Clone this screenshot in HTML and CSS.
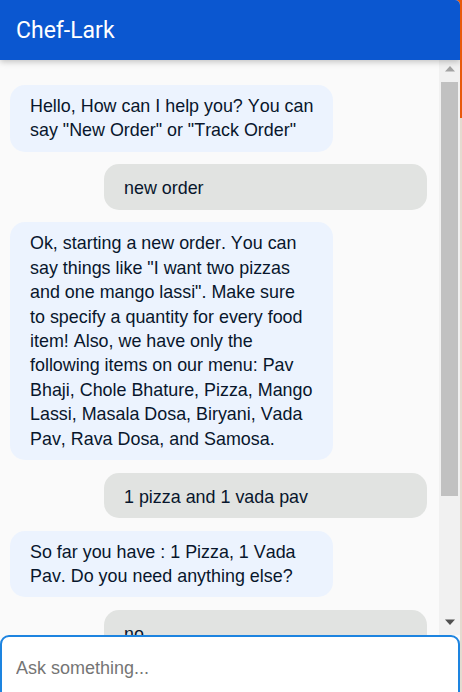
FILE: index.html
```html
<!DOCTYPE html>
<html lang="en">
<head>
<meta charset="utf-8">
<title>Chef-Lark</title>
<link rel="stylesheet" href="styles.css">
</head>
<body>
<div class="app">
  <header class="header">
    <h1 class="title">Chef-Lark</h1>
  </header>
  <main class="chat">
    <div class="messages">
      <div class="msg bot">Hello, How can I help you? You can say "New Order" or "Track Order"</div>
      <div class="msg user">new order</div>
      <div class="msg bot">Ok, starting a new order. You can say things like "I want two pizzas and one mango lassi". Make sure to specify a quantity for every food item! Also, we have only the following items on our menu: Pav Bhaji, Chole Bhature, Pizza, Mango Lassi, Masala Dosa, Biryani, Vada Pav, Rava Dosa, and Samosa.</div>
      <div class="msg user">1 pizza and 1 vada pav</div>
      <div class="msg bot">So far you have : 1 Pizza, 1 Vada Pav. Do you need anything else?</div>
      <div class="msg user">no</div>
    </div>
    <div class="scrollbar" aria-hidden="true">
      <div class="sb-btn">
        <svg width="10" height="6" viewBox="0 0 10 6"><polygon points="5,0 10,5.5 0,5.5" fill="#a3a3a3"/></svg>
      </div>
      <div class="sb-track">
        <div class="sb-thumb"></div>
      </div>
      <div class="sb-btn">
        <svg width="10" height="6" viewBox="0 0 10 6"><polygon points="0,0.5 10,0.5 5,6" fill="#505050"/></svg>
      </div>
    </div>
  </main>
  <div class="composer">
    <input class="ask" type="text" placeholder="Ask something...">
  </div>
</div>
</body>
</html>
```
FILE: styles.css
```css
html, body {
  margin: 0;
  padding: 0;
  height: 100%;
  overflow: hidden;
}
body {
  background: linear-gradient(to bottom, #e8590c 0, #e8590c 118px, #e3dbd0 118px, #e3dbd0 100%);
  font-family: "Liberation Sans", Arial, sans-serif;
}
.app {
  width: 460px;
  height: 100vh;
  display: flex;
  flex-direction: column;
  background: #fafafa;
  border-top-right-radius: 5px;
  overflow: hidden;
}
.header {
  height: 60px;
  flex: 0 0 60px;
  background: #0b57d0;
  display: flex;
  align-items: center;
  padding: 0 16px;
  box-shadow: 0 2px 6px rgba(0, 0, 0, 0.22);
  position: relative;
  z-index: 2;
}
.title {
  margin: 0;
  color: #ffffff;
  font-family: Roboto, "Liberation Sans", sans-serif;
  font-weight: 400;
  font-size: 23px;
  line-height: 1;
  padding-top: 1px;
}
.chat {
  flex: 1 1 auto;
  min-height: 0;
  display: flex;
  background: #fafafa;
}
.messages {
  flex: 1 1 auto;
  min-width: 0;
  overflow: hidden;
  padding: 25px 0 0 10px;
  display: flex;
  flex-direction: column;
  gap: 12.6px;
}
.msg {
  width: 323px;
  box-sizing: border-box;
  padding: 9px 18.8px 9px 20px;
  border-radius: 15px;
  font-size: 17.9px;
  font-kerning: none;
  line-height: 24.4px;
  color: #08162c;
  flex: 0 0 auto;
}
.bot {
  background: #ecf3fe;
  align-self: flex-start;
}
.user {
  background: #e1e3e1;
  align-self: flex-start;
  margin-left: 94px;
  padding: 12px 18.8px 9px 20px;
}
.scrollbar {
  flex: 0 0 21px;
  width: 21px;
  background: #f1f1f1;
  display: flex;
  flex-direction: column;
  padding-bottom: 4px;
  box-sizing: border-box;
}
.sb-btn {
  flex: 0 0 18px;
  display: flex;
  align-items: center;
  justify-content: center;
}
.sb-btn svg {
  display: block;
}
.sb-track {
  flex: 1 1 auto;
  padding: 4px 2px 0 2px;
}
.sb-thumb {
  height: 414px;
  background: #c1c1c1;
}
.composer {
  flex: 0 0 66px;
  margin-bottom: -9px;
  display: flex;
  background: #fafafa;
}
.ask {
  flex: 1;
  margin: 0;
  box-sizing: border-box;
  height: 66px;
  border: 2px solid #1d84e0;
  border-radius: 9px;
  background: #ffffff;
  padding: 0 14px;
  font-family: "Liberation Sans", Arial, sans-serif;
  font-size: 18px;
  color: #222;
  outline: none;
}
.ask::placeholder {
  color: #757575;
}
```
